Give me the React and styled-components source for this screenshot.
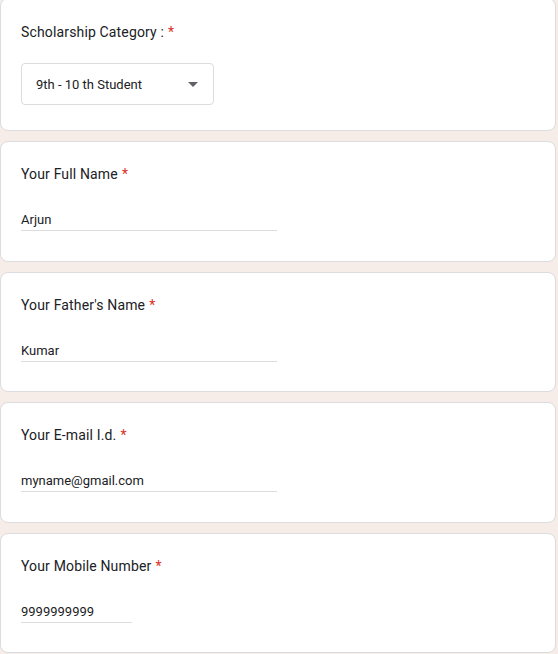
import React from "react";
import styled, { createGlobalStyle } from "styled-components";

const Global = createGlobalStyle`
  html, body { margin: 0; padding: 0; background: #f6ece8; }
  body { font-family: Roboto, "Liberation Sans", sans-serif; color: #202124; }
`;

const Page = styled.div`
  display: flex;
  flex-direction: column;
  gap: 10px;
  width: 556px;
  margin-top: -2px;
`;

const Card = styled.div`
  background: #fff;
  border: 1px solid #dadce0;
  border-radius: 8px;
  box-sizing: border-box;
  height: ${(p) => p.$h}px;
  padding: ${(p) => p.$pt}px 20px 0 20px;
  display: flex;
  flex-direction: column;
`;

const Label = styled.div`
  font-family: Roboto, "Liberation Sans", sans-serif;
  font-size: 14px;
  line-height: 20px;
  color: #202124;
  letter-spacing: 0.15px;
`;

const Star = styled.span`
  color: #d93025;
  margin-left: 4px;
  font-size: 14px;
`;

const Select = styled.div`
  margin-top: 21px;
  width: 193px;
  height: 42px;
  box-sizing: border-box;
  border: 1px solid #dadce0;
  border-radius: 4px;
  display: flex;
  align-items: center;
  padding: 0 15px 0 14px;
  justify-content: space-between;
  font-size: 13px;
  color: #202124;
`;

const Caret = styled.span`
  width: 0;
  height: 0;
  border-left: 5px solid transparent;
  border-right: 5px solid transparent;
  border-top: 5px solid #5f6368;
`;

const Field = styled.div`
  margin-top: 27px;
  width: ${(p) => p.$w}px;
  border-bottom: 1px solid #dadce0;
  font-size: 13px;
  line-height: 18px;
  padding-bottom: 1px;
  color: #202124;
`;

const fields = [
  { label: "Your Full Name", value: "Arjun", w: 256 },
  { label: "Your Father's Name", value: "Kumar", w: 256 },
  { label: "Your E-mail I.d.", value: "myname@gmail.com", w: 256 },
  { label: "Your Mobile Number", value: "9999999999", w: 111 },
];

export default function App() {
  return (
    <>
      <Global />
      <Page>
        <Card $h={133} $pt={23}>
          <Label>
            Scholarship Category :<Star>*</Star>
          </Label>
          <Select>
            <span>9th - 10 th Student</span>
            <Caret />
          </Select>
        </Card>
        {fields.map((f) => (
          <Card key={f.label} $h={120.5} $pt={22}>
            <Label>
              {f.label}
              <Star>*</Star>
            </Label>
            <Field $w={f.w}>{f.value}</Field>
          </Card>
        ))}
      </Page>
    </>
  );
}
